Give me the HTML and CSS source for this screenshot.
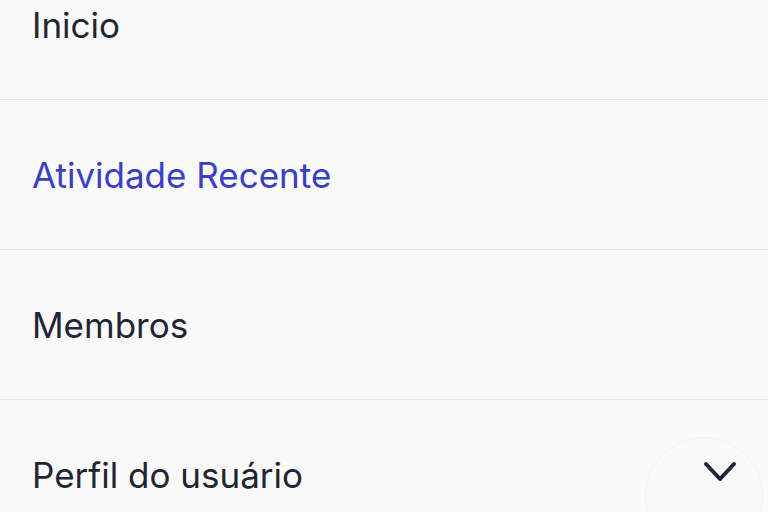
FILE: index.html
```html
<!DOCTYPE html>
<html lang="pt-BR">
<head>
    <meta charset="UTF-8">
    <meta name="viewport" content="width=device-width, initial-scale=1.0">
    <title>Menu</title>
    <link rel="stylesheet" href="styles.css">
</head>
<body>
    <nav class="menu">
        <a class="menu-item" href="#">Inicio</a>
        <a class="menu-item active" href="#">Atividade Recente</a>
        <a class="menu-item" href="#">Membros</a>
        <div class="menu-item submenu">
            <span>Perfil do usuário</span>
            <span class="ripple"></span>
            <button class="toggle" aria-label="Abrir">
                <svg width="36" height="24" viewBox="0 0 36 24" fill="none" stroke="#1f2633" stroke-width="4" stroke-linecap="round" stroke-linejoin="round">
                    <path d="M4 4 L18 19 L32 4"/>
                </svg>
            </button>
        </div>
    </nav>
</body>
</html>
```

FILE: styles.css
```css
body {
    margin: 0;
    background-color: #f9f9f9;
    font-family: Inter, "Noto Sans", sans-serif;
    overflow: hidden;
}

.menu {
    display: flex;
    flex-direction: column;
    margin-top: -50px;
}

.menu-item {
    display: flex;
    align-items: center;
    justify-content: space-between;
    height: 149px;
    padding: 0 32px;
    border-bottom: 1px solid #e4e4e4;
    color: #1e2533;
    font-size: 35px;
    text-decoration: none;
}

.menu-item.active {
    color: #3a40c2;
}

.submenu {
    position: relative;
}

.ripple {
    position: absolute;
    right: 5px;
    top: 37px;
    width: 116px;
    height: 116px;
    border-radius: 50%;
    border: 1px solid #f2f2f2;
}

.toggle {
    width: 36px;
    height: 24px;
    border: none;
    background: transparent;
    padding: 0;
    margin-right: -2px;
    margin-top: -5px;
}
```
